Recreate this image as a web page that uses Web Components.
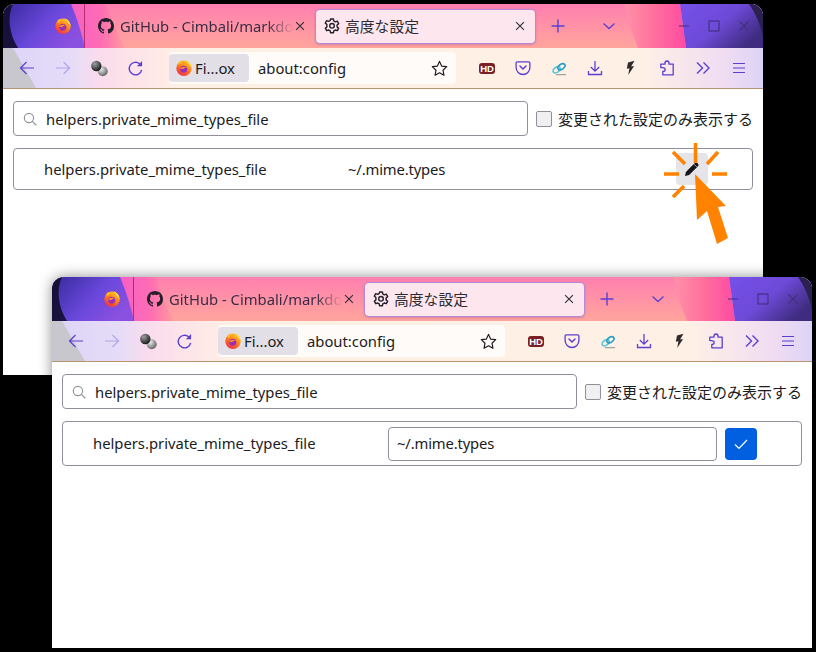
<!DOCTYPE html>
<html lang="ja">
<head>
<meta charset="utf-8">
<title>about:config</title>
<style>
    html, body {
        margin: 0;
        height: 100%;
        background: #000;
        overflow: hidden;
    }
    body {
        position: relative;
        font-family: "Noto Sans", "Noto Sans CJK JP", sans-serif;
    }
    #first { left: 3px; top: 4px; }
    #second { left: 52px; top: 277px; box-shadow: 0 0 14px rgba(0, 0, 0, 0.45); }
</style>
</head>
<body>

<fx-window id="first">
    <config-page query="helpers.private_mime_types_file">
        <pref-row name="helpers.private_mime_types_file" value="~/.mime.types"></pref-row>
    </config-page>
</fx-window>

<fx-window id="second">
    <config-page query="helpers.private_mime_types_file">
        <pref-row name="helpers.private_mime_types_file" value="~/.mime.types" editing></pref-row>
    </config-page>
</fx-window>

<script>
const GITHUB_PATH = 'M8 0C3.58 0 0 3.58 0 8c0 3.54 2.29 6.53 5.47 7.59.4.07.55-.17.55-.38 0-.19-.01-.82-.01-1.49-2.01.37-2.53-.49-2.69-.94-.09-.23-.48-.94-.82-1.13-.28-.15-.68-.52-.01-.53.63-.01 1.08.58 1.23.82.72 1.21 1.87.87 2.33.66.07-.52.28-.87.51-1.07-1.78-.2-3.64-.89-3.64-3.95 0-.87.31-1.59.82-2.15-.08-.2-.36-1.02.08-2.12 0 0 .67-.21 2.2.82.64-.18 1.32-.27 2-.27.68 0 1.36.09 2 .27 1.53-1.04 2.2-.82 2.2-.82.44 1.1.16 1.92.08 2.12.51.56.82 1.27.82 2.15 0 3.07-1.87 3.75-3.65 3.95.29.25.54.73.54 1.48 0 1.07-.01 1.93-.01 2.2 0 .21.15.46.55.38A8.013 8.013 0 0016 8c0-4.42-3.58-8-8-8z';

// stroke icons are drawn in currentColor on a 16 box
const ICONS = {
    firefox: `<defs>
            <linearGradient id="ffo" x1="0.8" y1="0" x2="0.2" y2="1"><stop offset="0" stop-color="#ffcf2a"/><stop offset="0.5" stop-color="#ff7a18"/><stop offset="1" stop-color="#f0254f"/></linearGradient>
        </defs>
        <circle cx="8" cy="8.3" r="7.700" fill="url(#ffo)"/>
        <path d="M9.800 .2c3.200 1.400 5.800 4.500 5.800 8.100-.7-2-1.900-3.300-3.300-4 .2-1.500-1-3-2.500-4.100z" fill="#ffe04a"/>
        <path d="M2.600 2.600c1-1.100 2.400-1.700 3.600-1.800-.6.8-.8 1.800-.5 2.500L2.700 5.200z" fill="#ffb52e"/>
        <circle cx="7.800" cy="9.200" r="3.500" fill="#9a2fb8"/>
        <path d="M4.100 8.700c1.500-2.300 4.900-2.700 7.200-1-1.700-.4-3.300.2-3.800 1.300z" fill="#ff9420"/>`,
    github: `<path d="${GITHUB_PATH}" fill="currentColor"/>`,
    gear: `<g fill="none" stroke="currentColor" stroke-width="1.4" stroke-linejoin="round">
            <path d="M6.600 1h2.800l.4 2 1.500.9 2-.7 1.400 2.400-1.600 1.400v1.900l1.600 1.300-1.400 2.500-2-.7-1.500.9-.4 1.900H6.600l-.4-1.900-1.500-.9-2 .7-1.400-2.500 1.600-1.300V6.500L1.300 5.100l1.400-2.400 2 .7 1.500-.9z"/>
            <circle cx="8" cy="7.800" r="2.300"/></g>`,
    close: `<path d="M3.500 3.500l9 9M12.500 3.500l-9 9" fill="none" stroke="currentColor" stroke-width="1.2"/>`,
    plus: `<path d="M8 1.500v13M1.500 8h13" fill="none" stroke="currentColor" stroke-width="1.4"/>`,
    chevron: `<path d="M2.500 5.500L8 10.500l5.500-5" fill="none" stroke="currentColor" stroke-width="1.3"/>`,
    minimize: `<path d="M3 8h10" fill="none" stroke="currentColor" stroke-width="1.1"/>`,
    maximize: `<rect x="3" y="3" width="10" height="10" fill="none" stroke="currentColor" stroke-width="1.1"/>`,
    back: `<path d="M15 8H1.500M7.500 2L1.500 8l6 6" fill="none" stroke="currentColor" stroke-width="1.2"/>`,
    forward: `<path d="M1 8h13.500M8.500 2l6 6-6 6" fill="none" stroke="currentColor" stroke-width="1.2"/>`,
    reload: `<path d="M13.800 9.200A5.900 5.900 0 1 1 12 3.700" fill="none" stroke="currentColor" stroke-width="1.300"/><path d="M14.200 .9v4.900H9.300z" fill="currentColor"/>`,
    balls: `<defs>
            <radialGradient id="bd" cx="0.35" cy="0.3" r="0.8"><stop offset="0" stop-color="#a0a0a0"/><stop offset="1" stop-color="#0d0d0d"/></radialGradient>
            <radialGradient id="bl" cx="0.35" cy="0.3" r="0.8"><stop offset="0" stop-color="#ececec"/><stop offset="1" stop-color="#555"/></radialGradient>
        </defs>
        <circle cx="11" cy="10.600" r="4.700" fill="url(#bl)"/>
        <circle cx="5" cy="5.600" r="4.900" fill="url(#bd)"/>`,
    star: `<path d="M8 1.300l2 4.400 4.800.6-3.500 3.300.9 4.800L8 12.100l-4.200 2.300.9-4.800L1.200 6.300 6 5.700z" fill="none" stroke="#1c1b22" stroke-width="1.1" stroke-linejoin="round"/>`,
    pocket: `<path d="M2.300 1.800h11.400c.7 0 1.200.5 1.200 1.200v4.600a6.900 6.900 0 0 1-13.800 0V3c0-.7.5-1.200 1.200-1.200z" fill="none" stroke="currentColor" stroke-width="1.300"/><path d="M5 6l3 3 3-3" fill="none" stroke="currentColor" stroke-width="1.500" stroke-linecap="round" stroke-linejoin="round"/>`,
    link: `<g fill="none" stroke-width="1.700">
            <ellipse cx="5.600" cy="9.800" rx="4" ry="2.500" transform="rotate(-35 5.600 9.800)" stroke="#5cc6da"/>
            <ellipse cx="10.400" cy="6.800" rx="4" ry="2.500" transform="rotate(-35 10.400 6.800)" stroke="#2b9fc4"/>
            <path d="M5 14.600h10" stroke="#9aa7a0" stroke-width="1.400"/></g>`,
    download: `<path d="M8 1v10M3.800 7L8 11.200 12.200 7M1.500 11v3.500h13V11" fill="none" stroke="currentColor" stroke-width="1.300"/>`,
    bolt: `<path d="M11.500 .8L5 2.600 3.800 8.800l2.600-.6-1.200 6.900 5.900-9-3 .5z" fill="#2e2a2a"/>`,
    puzzle: `<path d="M6 3.200c0-1.400 .9-2.200 2-2.200s2 .8 2 2.200v1h4.200v10.600H3.800v-3.400c1.500 0 2.400-.8 2.400-1.900S5.300 7.600 3.800 7.600H1.800V4.200H6z" fill="none" stroke="currentColor" stroke-width="1.300" stroke-linejoin="round"/>`,
    overflow: `<path d="M2 2.500L7.500 8 2 13.500M8.500 2.500L14 8l-5.500 5.500" fill="none" stroke="currentColor" stroke-width="1.400"/>`,
    menu: `<path d="M2 3.500h12M2 8h12M2 12.500h12" fill="none" stroke="currentColor" stroke-width="1.200"/>`,
    search: `<circle cx="6.800" cy="6.800" r="5.300" fill="none" stroke="currentColor" stroke-width="1.300"/><path d="M10.700 10.700l4.500 4.500" fill="none" stroke="currentColor" stroke-width="1.400"/>`,
    check: `<path d="M2 8.500l4 4 8-8.500" fill="none" stroke="currentColor" stroke-width="1.200"/>`,
    pencil: `<path d="M1 15l.9-4.100L10.800 2c.7-.7 1.800-.7 2.500 0l.7 .7c.7 .7 .7 1.800 0 2.500L5.100 14.100z" fill="currentColor"/><path d="M10 3.200l2.800 2.800" stroke="#e5e5e9" stroke-width=".7"/>`
};

class FxIcon extends HTMLElement {
    constructor() {
        super();
        const size = this.getAttribute('size') || 16;
        const shadow = this.attachShadow({ mode: 'open' });
        shadow.innerHTML = `
            <style>
                :host { display: block; width: ${size}px; height: ${size}px; flex: none; }
                svg { display: block; width: 100%; height: 100%; }
            </style>
            <svg viewBox="0 0 16 16">${ICONS[this.getAttribute('name')] || ''}</svg>
        `;
    }
}
customElements.define('fx-icon', FxIcon);

class ToolButton extends HTMLElement {
    constructor() {
        super();
        const shadow = this.attachShadow({ mode: 'open' });
        shadow.innerHTML = `
            <style>
                :host {
                    display: flex;
                    align-items: center;
                    justify-content: center;
                    flex: none;
                    width: 36px;
                    height: 40px;
                    color: #5a3fd2;
                }
                :host([dim]) { opacity: 0.35; }
                :host([narrow]) { width: 30px; color: #41307c; }
            </style>
            <slot></slot>
        `;
    }
}
customElements.define('tool-button', ToolButton);

class FxTab extends HTMLElement {
    constructor() {
        super();
        const shadow = this.attachShadow({ mode: 'open' });
        shadow.innerHTML = `
            <style>
                :host {
                    display: flex;
                    align-items: center;
                    flex: none;
                    box-sizing: border-box;
                    height: 33px;
                    padding-left: 5px;
                    font-size: 14.8px;
                    color: #3b2c46;
                }
                :host([selected]) {
                    background: #fde6ee;
                    border-radius: 4px;
                    box-shadow: 0 0 0 1px #b48ad8, 0 1px 3px rgba(90, 50, 170, 0.5);
                    color: #2b2a33;
                }
                .title {
                    white-space: nowrap;
                    margin-left: 6px;
                    flex: 1;
                }
                :host([selected]) .title { margin-left: 5px; padding-bottom: 2px; }
                :host([fade]) .title {
                    -webkit-mask-image: linear-gradient(to left, transparent, #000 26px);
                    mask-image: linear-gradient(to left, transparent, #000 26px);
                }
                .close { margin-right: 8px; color: #2b2a33; }
                .favicon { color: #24202a; }
            </style>
            <span class="favicon"><slot></slot></span>
            <span class="title">${this.getAttribute('label')}</span>
            <fx-icon class="close" name="close" size="14"></fx-icon>
        `;
    }
}
customElements.define('fx-tab', FxTab);

const windowTemplate = document.createElement('template');
windowTemplate.innerHTML = `
    <style>
        :host {
            display: block;
            position: absolute;
            width: 760px;
            height: 371px;
            background: #fff;
            border-radius: 12px 12px 0 0;
        }
        .frame {
            height: 100%;
            border-radius: inherit;
            overflow: hidden;
            display: flex;
            flex-direction: column;
            background: #fff;
        }
        .chrome { position: relative; flex: none; height: 85px; }
        .theme { position: absolute; left: 0; top: 0; width: 760px; height: 85px; display: block; }
        .tabbar, .navbar { position: relative; display: flex; align-items: center; }
        .tabbar { height: 44px; }
        .navbar {
            height: 40px;
            padding-left: 6px;
            border-bottom: 1px solid #b8946e;
        }
        .view {
            width: 82px;
            height: 44px;
            flex: none;
            box-sizing: border-box;
            border-right: 1px solid #b0306f;
            padding-left: 52px;
            display: flex;
            align-items: center;
        }
        .tab-one { width: 225px; padding-left: 13px; }
        .tab-two { width: 219px; margin-left: 6px; padding-left: 8px; }
        .gap-a { margin-left: 5px; }
        .gap-b { margin-left: 15px; }
        .gap-c { margin-left: 42px; }
        .urlbar {
            flex: none;
            display: flex;
            align-items: center;
            width: 287px;
            height: 32px;
            margin-left: 16px;
            background: rgba(255, 255, 255, 0.75);
            border-radius: 4px;
            font-size: 14.8px;
            color: #1c1b22;
        }
        .identity {
            display: flex;
            align-items: center;
            gap: 3px;
            box-sizing: border-box;
            width: 80px;
            height: 28px;
            padding-left: 7px;
            background: #e3dfe6;
            border-radius: 4px;
        }
        .address { margin-left: 9px; flex: 1; }
        .star { margin-right: 8px; }
        .hd {
            display: block;
            width: 16px;
            height: 11px;
            border-radius: 3px;
            background: #7a1f24;
            color: #fff;
            font: bold 9.5px/11px "Liberation Sans", sans-serif;
            text-align: center;
        }
        .gap-d { margin-left: 13px; }
        main { flex: 1; min-height: 0; }
    </style>
    <div class="frame">
        <div class="chrome">
            <svg class="theme" viewBox="0 0 760 85" preserveAspectRatio="none">
                <defs>
                    <linearGradient id="sky" x1="0" y1="0" x2="0" y2="1">
                        <stop offset="0" stop-color="#ff7fb0"/>
                        <stop offset="1" stop-color="#ffa59c"/>
                    </linearGradient>
                    <linearGradient id="magenta" x1="0" y1="0" x2="1" y2="0">
                        <stop offset="0" stop-color="#f25cc8"/>
                        <stop offset="0.6" stop-color="#ff6cb4"/>
                        <stop offset="1" stop-color="#ff9a9c"/>
                    </linearGradient>
                    <linearGradient id="hot" x1="0" y1="0" x2="1" y2="0">
                        <stop offset="0" stop-color="#ff90a8"/>
                        <stop offset="0.5" stop-color="#ff6f9c"/>
                        <stop offset="1" stop-color="#ff4aa4"/>
                    </linearGradient>
                    <linearGradient id="deep" x1="0" y1="0" x2="1" y2="0.5">
                        <stop offset="0" stop-color="#35299a"/>
                        <stop offset="0.6" stop-color="#6a48dc"/>
                        <stop offset="1" stop-color="#8a50e0"/>
                    </linearGradient>
                    <linearGradient id="deepR" x1="0" y1="0" x2="1" y2="0.6">
                        <stop offset="0" stop-color="#7650ea"/>
                        <stop offset="0.55" stop-color="#6e4ad8"/>
                        <stop offset="1" stop-color="#3f2c80"/>
                    </linearGradient>
                    <linearGradient id="cream" x1="0" y1="0" x2="1" y2="0">
                        <stop offset="0" stop-color="#dcd4f8"/>
                        <stop offset="0.09" stop-color="#e6dcf8"/>
                        <stop offset="0.13" stop-color="#fbdcec"/>
                        <stop offset="0.24" stop-color="#fff0e4"/>
                        <stop offset="0.84" stop-color="#fff0e6"/>
                        <stop offset="0.95" stop-color="#f0dcf2"/>
                        <stop offset="1" stop-color="#dcd4f6"/>
                    </linearGradient>
                </defs>
                <rect width="760" height="44" fill="url(#sky)"/>
                <path d="M62 0h42c4 14 10 30 18 44H60z" fill="url(#magenta)"/>
                <path d="M622 0h55l6 44h-48c-6-16-11-30-13-44z" fill="url(#hot)"/>
                <path d="M0 0h68c6 14 11 30 14 44H0z" fill="url(#deep)"/>
                <path d="M0 0h10C4 12 6 30 15 44H0z" fill="#0d0a24" opacity="0.85"/>
                <path d="M677 0h83v44h-77c-2-14-4-30-6-44z" fill="url(#deepR)"/>
                <path d="M746 0h14v32C757 20 752 8 746 0z" fill="#2b2150"/>
                <rect y="44" width="760" height="41" fill="url(#cream)"/>
                <path d="M0 44h10l23 40H0z" fill="#c9c7ce"/>
            </svg>
            <div class="tabbar">
                <div class="view"><fx-icon name="firefox"></fx-icon></div>
                <fx-tab class="tab-one" fade label="GitHub - Cimbali/markdo"><fx-icon name="github"></fx-icon></fx-tab>
                <fx-tab class="tab-two" selected label="高度な設定"><fx-icon name="gear"></fx-icon></fx-tab>
                <tool-button class="gap-a"><fx-icon name="plus"></fx-icon></tool-button>
                <tool-button class="gap-b"><fx-icon name="chevron"></fx-icon></tool-button>
                <tool-button class="gap-c" narrow><fx-icon name="minimize"></fx-icon></tool-button>
                <tool-button narrow><fx-icon name="maximize"></fx-icon></tool-button>
                <tool-button narrow><fx-icon name="close"></fx-icon></tool-button>
            </div>
            <div class="navbar">
                <tool-button><fx-icon name="back"></fx-icon></tool-button>
                <tool-button dim><fx-icon name="forward"></fx-icon></tool-button>
                <tool-button><fx-icon name="balls" size="17"></fx-icon></tool-button>
                <tool-button><fx-icon name="reload" size="17"></fx-icon></tool-button>
                <div class="urlbar">
                    <span class="identity"><fx-icon name="firefox"></fx-icon><span>Fi...ox</span></span>
                    <span class="address">about:config</span>
                    <fx-icon class="star" name="star" size="17"></fx-icon>
                </div>
                <tool-button class="gap-d"><span class="hd">HD</span></tool-button>
                <tool-button><fx-icon name="pocket"></fx-icon></tool-button>
                <tool-button><fx-icon name="link"></fx-icon></tool-button>
                <tool-button><fx-icon name="download"></fx-icon></tool-button>
                <tool-button><fx-icon name="bolt"></fx-icon></tool-button>
                <tool-button><fx-icon name="puzzle"></fx-icon></tool-button>
                <tool-button><fx-icon name="overflow"></fx-icon></tool-button>
                <tool-button><fx-icon name="menu"></fx-icon></tool-button>
            </div>
        </div>
        <main><slot></slot></main>
    </div>
`;

class FxWindow extends HTMLElement {
    constructor() {
        super();
        this.attachShadow({ mode: 'open' }).appendChild(windowTemplate.content.cloneNode(true));
    }
}
customElements.define('fx-window', FxWindow);

class ConfigPage extends HTMLElement {
    constructor() {
        super();
        const shadow = this.attachShadow({ mode: 'open' });
        shadow.innerHTML = `
            <style>
                :host {
                    display: flex;
                    flex-direction: column;
                    gap: 12px;
                    padding: 12px 10px;
                    font-size: 14.8px;
                    color: #1c1b22;
                }
                .bar { display: flex; align-items: center; }
                .search {
                    flex: 1;
                    display: flex;
                    align-items: center;
                    box-sizing: border-box;
                    height: 35px;
                    padding-left: 9px;
                    border: 1px solid #8f8f9d;
                    border-radius: 4px;
                }
                .search fx-icon { color: #94949c; }
                .query { margin-left: 9px; }
                .box {
                    flex: none;
                    box-sizing: border-box;
                    width: 16px;
                    height: 16px;
                    margin-left: 8px;
                    background: #f0f0f0;
                    border: 1px solid #8f8f9d;
                    border-radius: 2px;
                }
                .label { margin-left: 6px; white-space: nowrap; font-size: 15px; }
            </style>
            <div class="bar">
                <div class="search">
                    <fx-icon name="search" size="14"></fx-icon>
                    <span class="query">${this.getAttribute('query')}</span>
                </div>
                <span class="box"></span>
                <span class="label">変更された設定のみ表示する</span>
            </div>
            <slot></slot>
        `;
    }
}
customElements.define('config-page', ConfigPage);

class PrefRow extends HTMLElement {
    constructor() {
        super();
        const editing = this.hasAttribute('editing');
        const value = this.getAttribute('value');
        const shadow = this.attachShadow({ mode: 'open' });
        shadow.innerHTML = `
            <style>
                :host {
                    display: flex;
                    align-items: center;
                    box-sizing: border-box;
                    width: 740px;
                    height: ${editing ? 45 : 42}px;
                    padding-left: 30px;
                    border: 1px solid #8f8f9d;
                    border-radius: 4px;
                }
                :host([editing]) .name { padding-bottom: 2px; }
                .name { flex: none; width: 295px; white-space: nowrap; box-sizing: content-box; }
                .value {
                    flex: none;
                    box-sizing: border-box;
                    width: 329px;
                    height: 34px;
                    line-height: 32px;
                    padding-left: 8px;
                    letter-spacing: -0.15px;
                    border: 1px solid transparent;
                    border-radius: 4px;
                }
                :host([editing]) .value { border-color: #8f8f9d; line-height: 30px; }
                .action {
                    position: relative;
                    flex: none;
                    display: flex;
                    align-items: center;
                    justify-content: center;
                    width: 32px;
                    height: 32px;
                    margin-left: 8px;
                    border-radius: 4px;
                    background: #e5e5e9;
                    color: #15141a;
                }
                :host([editing]) .action { background: #0060df; color: #fff; }
                click-marker { position: absolute; left: -16px; top: -12px; }
            </style>
            <span class="name">${this.getAttribute('name')}</span>
            <span class="value">${value}</span>
            <span class="action">
                <fx-icon name="${editing ? 'check' : 'pencil'}"></fx-icon>
                ${editing ? '' : '<click-marker></click-marker>'}
            </span>
        `;
    }
}
customElements.define('pref-row', PrefRow);

// orange "click here" rays and arrow over the edit button
class ClickMarker extends HTMLElement {
    constructor() {
        super();
        const shadow = this.attachShadow({ mode: 'open' });
        shadow.innerHTML = `
            <style>
                :host { display: block; width: 75px; height: 110px; pointer-events: none; }
                svg { display: block; }
            </style>
            <svg width="75" height="110" viewBox="660 140 75 110">
                <g stroke="#ff8200" stroke-width="3.6" fill="none">
                    <path d="M695.500 142v20M673 151l12 12M718 151l-11 12M664 173h15M712 173h15M673 196l11-11"/>
                </g>
                <path d="M695 173l2 46 10-9 10 33 11-6-10-31 8-1z" fill="#ff8200"/>
            </svg>
        `;
    }
}
customElements.define('click-marker', ClickMarker);
</script>
</body>
</html>
